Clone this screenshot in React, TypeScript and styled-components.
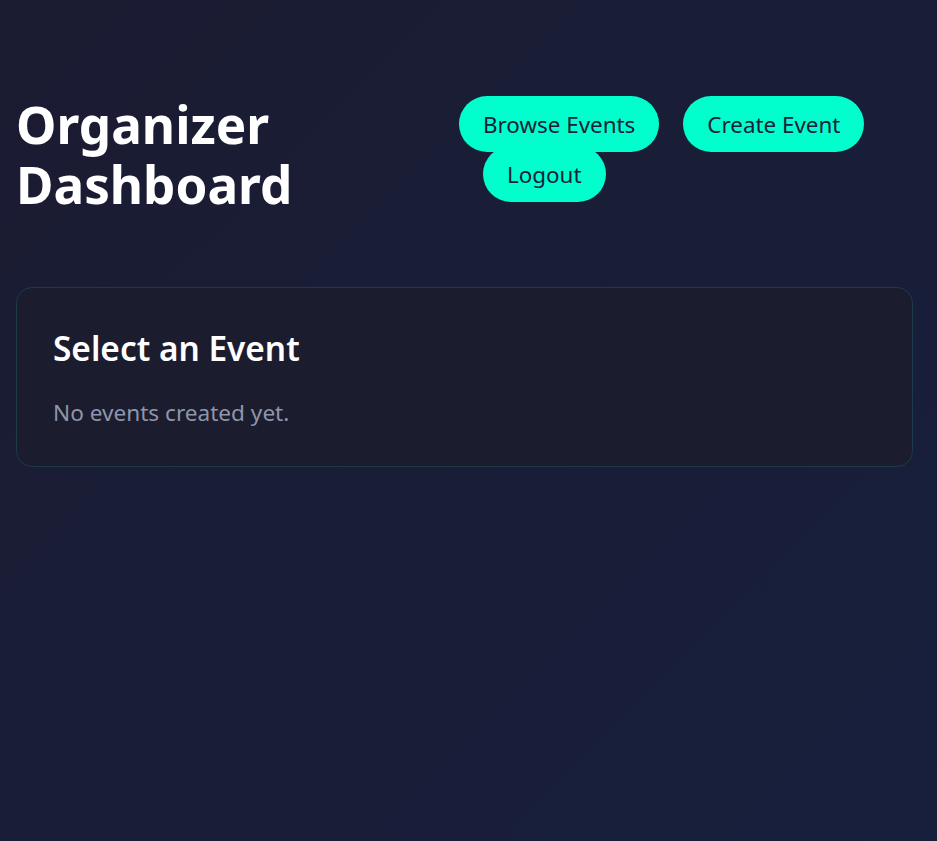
import React from "react";
import styled, { createGlobalStyle } from "styled-components";

const GlobalStyle = createGlobalStyle`
  html, body {
    margin: 0;
    padding: 0;
    min-height: 100%;
  }
  body {
    font-family: "Noto Sans", "Open Sans", sans-serif;
    background: linear-gradient(135deg, #1b1b31 0%, #191e37 50%, #171f3c 100%);
    min-height: 100vh;
    color: #ffffff;
  }
`;

const Page = styled.div`
  min-height: 841px;
  padding: 94px 24px 40px 16px;
  box-sizing: border-box;
`;

const Header = styled.header`
  display: flex;
  justify-content: space-between;
  align-items: flex-start;
  margin-bottom: 73px;
`;

const Title = styled.h1`
  margin: 0;
  font-size: 51.2px;
  line-height: 60px;
  font-weight: 700;
  color: #ffffff;
  width: 300px;
`;

const Nav = styled.nav`
  display: flex;
  flex-wrap: wrap;
  width: 454px;
  margin-top: 2px;
`;

const NavButton = styled.a`
  display: inline-flex;
  align-items: center;
  height: 56px;
  padding: 0 24px;
  box-sizing: border-box;
  border-radius: 28px;
  background: #00ffcc;
  color: #16213a;
  font-size: 22.4px;
  font-weight: 400;
  text-decoration: none;
  margin: 0 0 -6px;
  cursor: pointer;
  & + & {
    margin-left: 24px;
  }
`;

const Card = styled.section`
  background: #1b1c2e;
  border: 1px solid #1d3a48;
  border-radius: 16px;
  padding: 40px 36px 36px;
`;

const CardTitle = styled.h2`
  margin: 0 0 28px;
  font-size: 33.4px;
  line-height: 1.2;
  font-weight: 600;
  color: #ffffff;
`;

const Muted = styled.p`
  margin: 0;
  font-size: 22.6px;
  line-height: 1.5;
  color: #8f95aa;
`;

export default function App() {
  return (
    <>
      <GlobalStyle />
      <Page>
        <Header>
          <Title>Organizer Dashboard</Title>
          <Nav>
            <NavButton>Browse Events</NavButton>
            <NavButton>Create Event</NavButton>
            <NavButton>Logout</NavButton>
          </Nav>
        </Header>
        <Card>
          <CardTitle>Select an Event</CardTitle>
          <Muted>No events created yet.</Muted>
        </Card>
      </Page>
    </>
  );
}
